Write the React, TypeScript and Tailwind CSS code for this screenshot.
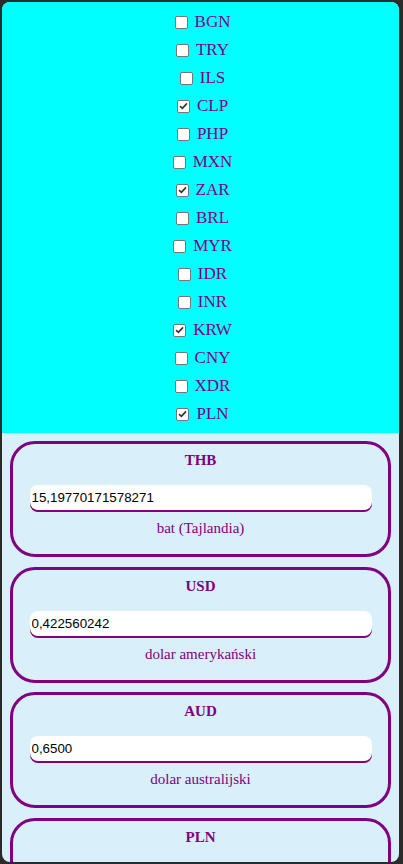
import { useState } from "react";

const CURRENCIES = [
  "BGN",
  "TRY",
  "ILS",
  "CLP",
  "PHP",
  "MXN",
  "ZAR",
  "BRL",
  "MYR",
  "IDR",
  "INR",
  "KRW",
  "CNY",
  "XDR",
  "PLN",
];

const initialChecked = ["CLP", "ZAR", "KRW", "PLN"];

interface Rate {
  code: string;
  value: string;
  name: string;
}

const rates: Rate[] = [
  { code: "THB", value: "15,19770171578271", name: "bat (Tajlandia)" },
  { code: "USD", value: "0,422560242", name: "dolar amerykański" },
  { code: "AUD", value: "0,6500", name: "dolar australijski" },
  { code: "PLN", value: "1", name: "złoty polski" },
];

const serif = "font-['Liberation_Serif','Times_New_Roman',serif]";

const CheckBox = ({ checked }: { checked: boolean }) => (
  <span className="ml-[4px] mr-[7px] flex h-[13px] w-[13px] items-center justify-center rounded-[2px] border border-[#767676] bg-white">
    {checked && (
      <svg width="9" height="8" viewBox="0 0 9 8">
        <path d="M1 4.2 L3.4 6.4 L8 1.4" fill="none" stroke="#333" strokeWidth="1.6" />
      </svg>
    )}
  </span>
);

const RateCard = ({ rate }: { rate: Rate }) => (
  <div className="flex h-[116px] shrink-0 flex-col items-center rounded-[25px] border-[3px] border-[#800080] pt-[7px]">
    <div className={`${serif} text-[15px] font-bold leading-[18px] text-[#800080]`}>
      {rate.code}
    </div>
    <input
      readOnly
      value={rate.value}
      className="mt-[16px] h-[25px] w-[342px] shrink-0 rounded-[8px] bg-white px-[2px] font-['Liberation_Sans',Arial,sans-serif] text-[13.33px] text-black shadow-[0_2px_0_#800080] outline-none"
    />
    <div className={`${serif} mt-[9px] text-[15px] leading-[18px] text-[#800080]`}>
      {rate.name}
    </div>
  </div>
);

export default function App() {
  const [checked, setChecked] = useState<string[]>(initialChecked);

  const toggle = (code: string) =>
    setChecked((prev) =>
      prev.includes(code) ? prev.filter((c) => c !== code) : [...prev, code]
    );

  return (
    <div className="h-[864px] bg-[#2b2b2b] pb-[2px] pl-[2px] pr-[4px] pt-[2px]">
      <div className="flex h-[860px] flex-col overflow-hidden rounded-[8px] bg-[#d9eff9]">
        <div className="shrink-0 bg-[#00ffff] pb-[5px] pt-[6px]">
          {CURRENCIES.map((code) => (
            <label
              key={code}
              onClick={() => toggle(code)}
              className="flex h-[28px] cursor-pointer items-center justify-center"
            >
              <CheckBox checked={checked.includes(code)} />
              <span className={`${serif} text-[17px] leading-[20px] text-[#800080]`}>
                {code}
              </span>
            </label>
          ))}
        </div>
        <div className="flex flex-col gap-[9.5px] px-[8px] pt-[8px]">
          {rates.map((rate) => (
            <RateCard key={rate.code} rate={rate} />
          ))}
        </div>
      </div>
    </div>
  );
}
